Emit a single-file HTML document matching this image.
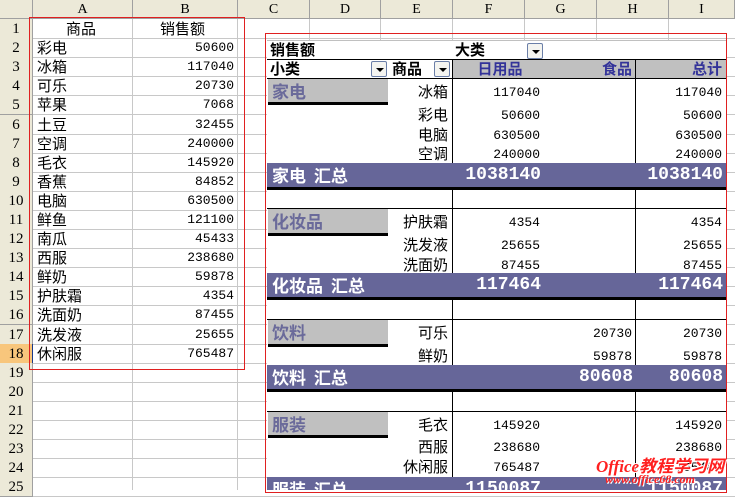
<!DOCTYPE html>
<html><head><meta charset="utf-8"><style>
*{margin:0;padding:0;box-sizing:border-box}
body{width:735px;height:490px;overflow:hidden;background:#fff;position:relative;font-family:"Liberation Sans","Noto Sans CJK SC",sans-serif;}
.a{position:absolute}
.hdr{position:absolute;top:0;height:19px;background:#ece9d8;border-right:1px solid #a0a0a0;border-bottom:1px solid #a0a0a0;text-align:center;font:14px "Liberation Serif",serif;line-height:20px;color:#000}
.row{position:absolute;left:0;width:735px;height:20px;border-bottom:1px solid #c8c8c8}
.rn{position:absolute;left:0;top:0;width:33px;height:20px;background:#ece9d8;border-right:1px solid #a0a0a0;border-bottom:1px solid #a0a0a0;text-align:center;font:15px "Liberation Serif",serif;line-height:20px}
.vl{position:absolute;top:19px;width:1px;height:471px;background:#c8c8c8}
.n{position:absolute;left:37px;top:0;font-size:15px;line-height:19px;font-family:"Noto Sans CJK SC",sans-serif}
.v{position:absolute;right:501px;top:0;font:13px "Liberation Mono",monospace;line-height:20px}
.pv{position:absolute;left:267px;top:40px;width:460px;height:450px;background:#fff;border-top:1px solid #c0c0c0}
.t{position:absolute;font-family:"Noto Sans CJK SC",sans-serif;font-size:15px;line-height:18px;white-space:nowrap}
.num{position:absolute;font:13px "Liberation Mono",monospace;line-height:18px;text-align:right}
.bl{position:absolute;background:#000}
.box{position:absolute;left:268px;width:120px;height:24px;background:#c0c0c0;color:#6a6a9a;font-weight:bold;font-size:17px;line-height:24px;padding-left:4px;font-family:"Noto Sans CJK SC",sans-serif}
.band{position:absolute;left:267px;width:460px;height:24px;background:#666699;color:#fff}
.band .bt{position:absolute;left:5px;top:0;font:bold 17px "Noto Sans CJK SC",sans-serif;line-height:24px;word-spacing:4px;white-space:pre}
.band .bn{position:absolute;top:0;font:bold 18px "Liberation Mono",monospace;line-height:25px;text-align:right}
.dd{position:absolute;width:16px;height:16px;border:1px solid #6b7fa8;border-radius:2px;background:#f4f4f0}
.dd:after{content:"";position:absolute;left:4px;top:6px;border-left:4px solid transparent;border-right:4px solid transparent;border-top:4px solid #000}
</style></head><body>
<div class="hdr" style="left:0;width:33px"></div>
<div class="hdr" style="left:33px;width:100px">A</div>
<div class="hdr" style="left:133px;width:105px">B</div>
<div class="hdr" style="left:238px;width:72px">C</div>
<div class="hdr" style="left:310px;width:71px">D</div>
<div class="hdr" style="left:381px;width:72px">E</div>
<div class="hdr" style="left:453px;width:72px">F</div>
<div class="hdr" style="left:525px;width:72px">G</div>
<div class="hdr" style="left:597px;width:72px">H</div>
<div class="hdr" style="left:669px;width:66px">I</div>
<div class="vl" style="left:132px"></div><div class="vl" style="left:237px"></div><div class="vl" style="left:309px"></div><div class="vl" style="left:380px"></div><div class="vl" style="left:452px"></div><div class="vl" style="left:524px"></div><div class="vl" style="left:596px"></div><div class="vl" style="left:668px"></div>

<div class="row" style="top:19px"><div class="rn">1</div><div class="n" style="left:66px">商品</div><div class="n" style="left:160px">销售额</div></div>
<div class="row" style="top:38px"><div class="rn">2</div><div class="n">彩电</div><div class="v">50600</div></div>
<div class="row" style="top:57px"><div class="rn">3</div><div class="n">冰箱</div><div class="v">117040</div></div>
<div class="row" style="top:76px"><div class="rn">4</div><div class="n">可乐</div><div class="v">20730</div></div>
<div class="row" style="top:95px"><div class="rn">5</div><div class="n">苹果</div><div class="v">7068</div></div>
<div class="row" style="top:115px"><div class="rn">6</div><div class="n">土豆</div><div class="v">32455</div></div>
<div class="row" style="top:134px"><div class="rn">7</div><div class="n">空调</div><div class="v">240000</div></div>
<div class="row" style="top:153px"><div class="rn">8</div><div class="n">毛衣</div><div class="v">145920</div></div>
<div class="row" style="top:172px"><div class="rn">9</div><div class="n">香蕉</div><div class="v">84852</div></div>
<div class="row" style="top:191px"><div class="rn">10</div><div class="n">电脑</div><div class="v">630500</div></div>
<div class="row" style="top:210px"><div class="rn">11</div><div class="n">鲜鱼</div><div class="v">121100</div></div>
<div class="row" style="top:229px"><div class="rn">12</div><div class="n">南瓜</div><div class="v">45433</div></div>
<div class="row" style="top:248px"><div class="rn">13</div><div class="n">西服</div><div class="v">238680</div></div>
<div class="row" style="top:267px"><div class="rn">14</div><div class="n">鲜奶</div><div class="v">59878</div></div>
<div class="row" style="top:286px"><div class="rn">15</div><div class="n">护肤霜</div><div class="v">4354</div></div>
<div class="row" style="top:305px"><div class="rn">16</div><div class="n">洗面奶</div><div class="v">87455</div></div>
<div class="row" style="top:325px"><div class="rn">17</div><div class="n">洗发液</div><div class="v">25655</div></div>
<div class="row" style="top:344px"><div class="rn" style="background:#f8c67c;border-right:1px solid #1a3a8a">18</div><div class="n">休闲服</div><div class="v">765487</div></div>
<div class="row" style="top:363px"><div class="rn">19</div></div>
<div class="row" style="top:382px"><div class="rn">20</div></div>
<div class="row" style="top:401px"><div class="rn">21</div></div>
<div class="row" style="top:420px"><div class="rn">22</div></div>
<div class="row" style="top:439px"><div class="rn">23</div></div>
<div class="row" style="top:458px"><div class="rn">24</div></div>
<div class="row" style="top:477px"><div class="rn">25</div></div>

<div class="a" style="left:29px;top:17px;width:216px;height:353px;border:1px solid #e02020"></div>

<div class="pv"></div>
<div class="t" style="left:270px;top:41px;font-weight:bold">销售额</div>
<div class="t" style="left:455px;top:41px;font-weight:bold">大类</div>
<div class="dd" style="left:527px;top:43px"></div>
<div class="bl" style="left:267px;top:59px;width:460px;height:1px"></div>
<div class="a" style="left:452px;top:60px;width:275px;height:18px;background:#c0c0c0"></div>
<div class="t" style="left:270px;top:60px;font-weight:bold">小类</div>
<div class="dd" style="left:371px;top:61px"></div>
<div class="t" style="left:392px;top:60px;font-weight:bold">商品</div>
<div class="dd" style="left:434px;top:61px"></div>
<div class="t" style="left:460px;top:60px;width:80px;text-align:center;font-weight:bold;color:#333399">日用品</div>
<div class="t" style="left:590px;top:60px;width:42px;text-align:right;font-weight:bold;color:#333399">食品</div>
<div class="t" style="left:670px;top:60px;width:52px;text-align:right;font-weight:bold;color:#333399">总计</div>
<div class="bl" style="left:267px;top:78px;width:460px;height:1px"></div>
<div class="bl" style="left:452px;top:60px;width:1px;height:430px"></div>
<div class="bl" style="left:635px;top:60px;width:1px;height:430px"></div>

<div class="box" style="top:79px">家电</div><div class="bl" style="left:268px;top:102px;width:120px;height:3px"></div>
<div class="t" style="left:380px;top:83px;width:68px;text-align:right">冰箱</div><div class="num" style="left:460px;top:84px;width:80px">117040</div><div class="num" style="left:640px;top:84px;width:82px">117040</div>
<div class="t" style="left:380px;top:106px;width:68px;text-align:right">彩电</div><div class="num" style="left:460px;top:107px;width:80px">50600</div><div class="num" style="left:640px;top:107px;width:82px">50600</div>
<div class="t" style="left:380px;top:126px;width:68px;text-align:right">电脑</div><div class="num" style="left:460px;top:127px;width:80px">630500</div><div class="num" style="left:640px;top:127px;width:82px">630500</div>
<div class="t" style="left:380px;top:145px;width:68px;text-align:right">空调</div><div class="num" style="left:460px;top:146px;width:80px">240000</div><div class="num" style="left:640px;top:146px;width:82px">240000</div>
<div class="band" style="top:163px"><div class="bt">家电 汇总</div><div class="bn" style="left:180px;width:94px">1038140</div><div class="bn" style="left:360px;width:96px">1038140</div></div>
<div class="bl" style="left:267px;top:187px;width:460px;height:3px"></div>
<div class="bl" style="left:267px;top:208px;width:460px;height:1px"></div>

<div class="box" style="top:209px">化妆品</div><div class="bl" style="left:268px;top:233px;width:120px;height:3px"></div>
<div class="t" style="left:380px;top:213px;width:68px;text-align:right">护肤霜</div><div class="num" style="left:460px;top:214px;width:80px">4354</div><div class="num" style="left:640px;top:214px;width:82px">4354</div>
<div class="t" style="left:380px;top:236px;width:68px;text-align:right">洗发液</div><div class="num" style="left:460px;top:237px;width:80px">25655</div><div class="num" style="left:640px;top:237px;width:82px">25655</div>
<div class="t" style="left:380px;top:256px;width:68px;text-align:right">洗面奶</div><div class="num" style="left:460px;top:257px;width:80px">87455</div><div class="num" style="left:640px;top:257px;width:82px">87455</div>
<div class="band" style="top:273px"><div class="bt">化妆品 汇总</div><div class="bn" style="left:180px;width:94px">117464</div><div class="bn" style="left:360px;width:96px">117464</div></div>
<div class="bl" style="left:267px;top:297px;width:460px;height:3px"></div>
<div class="bl" style="left:267px;top:319px;width:460px;height:1px"></div>

<div class="box" style="top:320px">饮料</div><div class="bl" style="left:268px;top:344px;width:120px;height:3px"></div>
<div class="t" style="left:380px;top:324px;width:68px;text-align:right">可乐</div><div class="num" style="left:550px;top:325px;width:82px">20730</div><div class="num" style="left:640px;top:325px;width:82px">20730</div>
<div class="t" style="left:380px;top:347px;width:68px;text-align:right">鲜奶</div><div class="num" style="left:550px;top:348px;width:82px">59878</div><div class="num" style="left:640px;top:348px;width:82px">59878</div>
<div class="band" style="top:365px"><div class="bt">饮料 汇总</div><div class="bn" style="left:270px;width:96px">80608</div><div class="bn" style="left:360px;width:96px">80608</div></div>
<div class="bl" style="left:267px;top:389px;width:460px;height:3px"></div>
<div class="bl" style="left:267px;top:411px;width:460px;height:1px"></div>

<div class="box" style="top:412px">服装</div><div class="bl" style="left:268px;top:435px;width:120px;height:3px"></div>
<div class="t" style="left:380px;top:416px;width:68px;text-align:right">毛衣</div><div class="num" style="left:460px;top:417px;width:80px">145920</div><div class="num" style="left:640px;top:417px;width:82px">145920</div>
<div class="t" style="left:380px;top:438px;width:68px;text-align:right">西服</div><div class="num" style="left:460px;top:439px;width:80px">238680</div><div class="num" style="left:640px;top:439px;width:82px">238680</div>
<div class="t" style="left:370px;top:458px;width:78px;text-align:right">休闲服</div><div class="num" style="left:460px;top:459px;width:80px">765487</div><div class="num" style="left:640px;top:459px;width:82px">765487</div>
<div class="band" style="top:477px;height:13px;overflow:hidden"><div class="bt">服装 汇总</div><div class="bn" style="left:180px;width:94px">1150087</div><div class="bn" style="left:360px;width:96px">1150087</div></div>

<div class="a" style="left:265px;top:33px;width:462px;height:460px;border:1px solid #e02020"></div>
<div class="a" style="left:596px;top:452px;font:italic bold 17px 'Liberation Serif','Noto Sans CJK SC',serif;color:#ff2020;text-shadow:1px 1px 0 #fff,-1px -1px 0 #fff">Office教程学习网</div>
<div class="a" style="left:605px;top:472px;font:italic bold 12px 'Liberation Serif',serif;color:#ff2020;text-shadow:1px 1px 0 #fff">www.office68.com</div>
</body></html>
